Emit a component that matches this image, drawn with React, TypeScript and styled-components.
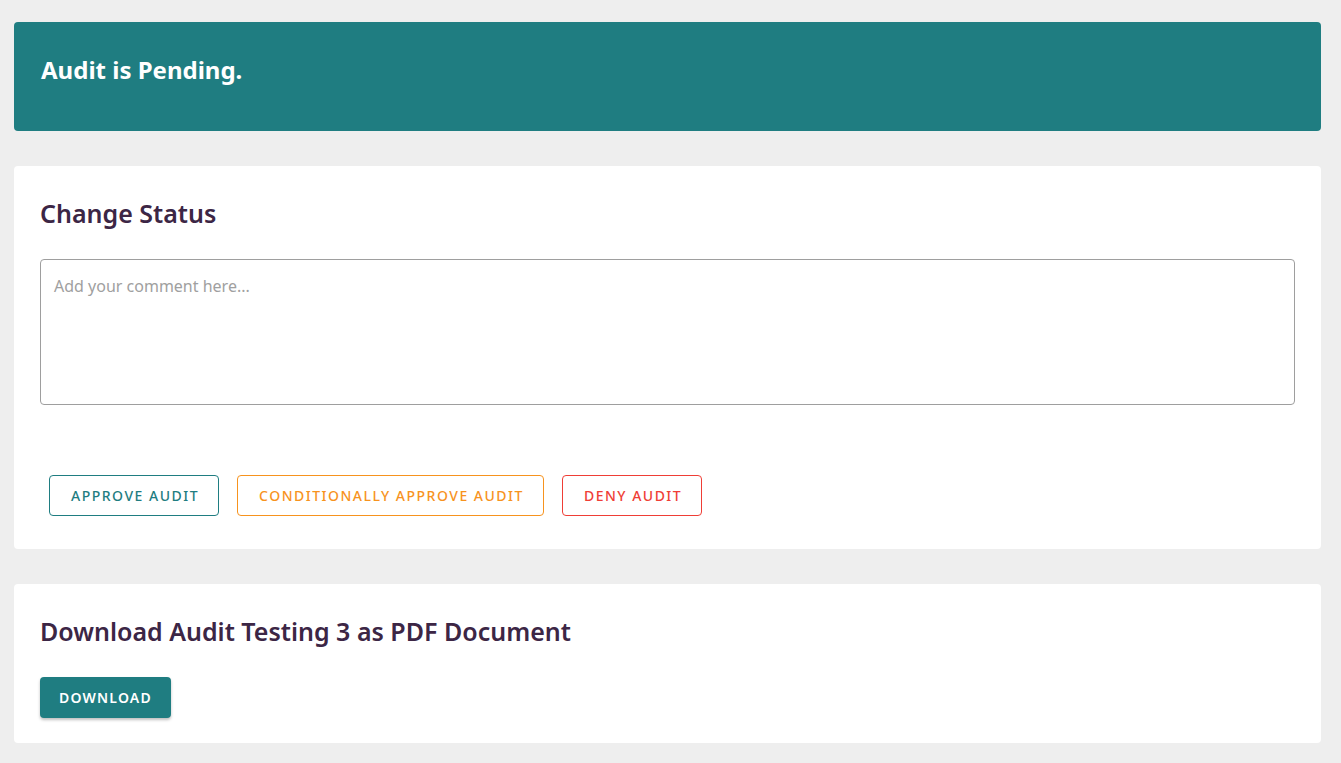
import React from "react";
import styled, { createGlobalStyle } from "styled-components";

const GlobalStyle = createGlobalStyle`
  html, body {
    margin: 0;
    padding: 0;
    background: #eeeeee;
    font-family: "Noto Sans", "Open Sans", sans-serif;
  }
  * { box-sizing: border-box; }
`;

const Page = styled.div`
  display: flex;
  flex-direction: column;
  gap: 35px;
  padding: 22px 20px 20px 14px;
`;

const Banner = styled.div`
  background: #1f7d81;
  border-radius: 4px;
  height: 109px;
  padding: 30px 27px 0;
`;

const BannerTitle = styled.h1`
  margin: 0;
  color: #ffffff;
  font-size: 24px;
  font-weight: 700;
  line-height: 36px;
`;

const Card = styled.section<{ $bottom: number }>`
  background: #ffffff;
  border-radius: 4px;
  padding: 27px 26px ${(p) => p.$bottom}px 26px;
  display: flex;
  flex-direction: column;
`;

const CardTitle = styled.h2`
  margin: 0;
  color: #3c2645;
  font-size: 25px;
  font-weight: 600;
  line-height: 40px;
`;

const Comment = styled.textarea`
  margin-top: 26px;
  height: 146px;
  width: 100%;
  resize: none;
  border: 1px solid #9e9e9e;
  border-radius: 4px;
  padding: 15px 13px;
  font-family: inherit;
  font-size: 16px;
  color: #333;
  &::placeholder {
    color: #a0a0a0;
  }
`;

const Actions = styled.div`
  display: flex;
  gap: 18px;
  margin-top: 70px;
  padding-left: 9px;
`;

const OutlineButton = styled.button<{ $color: string }>`
  height: 41px;
  padding: 0 19px 0 21px;
  background: #ffffff;
  border: 1px solid ${(p) => p.$color};
  border-radius: 4px;
  color: ${(p) => p.$color};
  font-family: inherit;
  font-size: 14px;
  font-weight: 500;
  letter-spacing: 1.5px;
  text-transform: uppercase;
  cursor: pointer;
`;

const SolidButton = styled.button`
  align-self: flex-start;
  margin-top: 26px;
  height: 41px;
  padding: 0 19px;
  background: #1f7d81;
  border: none;
  border-radius: 4px;
  color: #ffffff;
  font-family: inherit;
  font-size: 14px;
  font-weight: 600;
  letter-spacing: 1.2px;
  text-transform: uppercase;
  box-shadow: 0 2px 3px rgba(0, 0, 0, 0.25);
  cursor: pointer;
`;

export default function App() {
  return (
    <>
      <GlobalStyle />
      <Page>
        <Banner>
          <BannerTitle>Audit is Pending.</BannerTitle>
        </Banner>
        <Card $bottom={33}>
          <CardTitle>Change Status</CardTitle>
          <Comment placeholder="Add your comment here..." />
          <Actions>
            <OutlineButton $color="#1f7d81">Approve Audit</OutlineButton>
            <OutlineButton $color="#f7931e">Conditionally Approve Audit</OutlineButton>
            <OutlineButton $color="#ef3e36">Deny Audit</OutlineButton>
          </Actions>
        </Card>
        <Card $bottom={25}>
          <CardTitle>Download Audit Testing 3 as PDF Document</CardTitle>
          <SolidButton>Download</SolidButton>
        </Card>
      </Page>
    </>
  );
}
